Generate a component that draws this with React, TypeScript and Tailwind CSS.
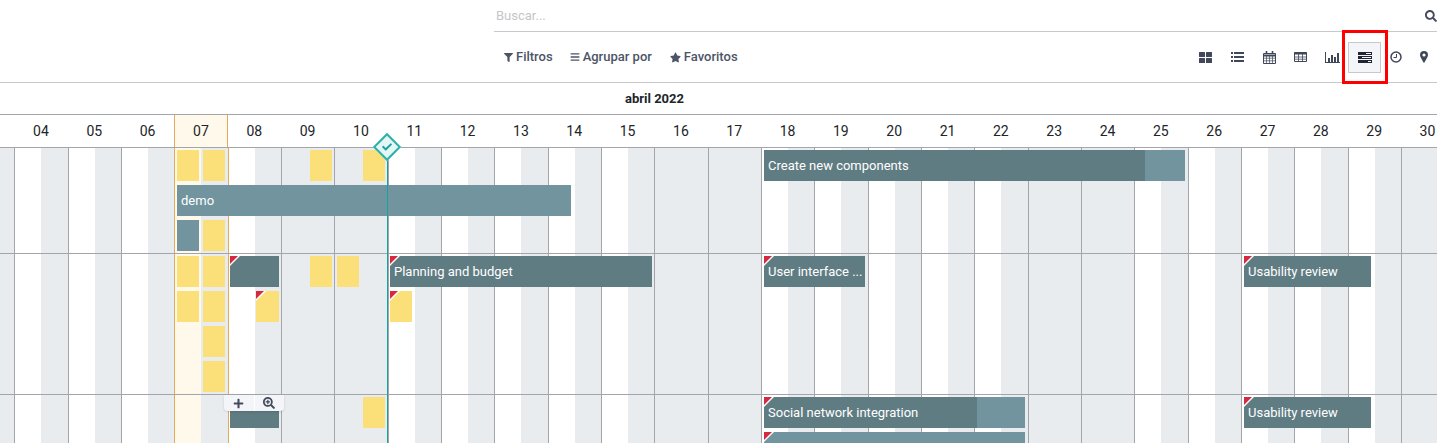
import { FaFilter, FaBars, FaStar, FaSearch, FaPlus, FaSearchPlus, FaCheck } from "react-icons/fa";

const days = ["04", "05", "06", "07", "08", "09", "10", "11", "12", "13", "14", "15", "16", "17", "18", "19", "20", "21", "22", "23", "24", "25", "26", "27", "28", "29", "30"];
const weekend = ["09", "10", "16", "17", "23", "24", "30"];

function Background() {
  return (
    <div className="absolute inset-0 grid grid-cols-[14.3px_repeat(27,53.33px)]">
      <div className="bg-[#e9ecef]" />
      {days.map((d) => (
        <div
          key={d}
          className={`flex border-l ${d === "07" || d === "08" ? "border-[#e6a95c]" : "border-[#a3a5aa]"}`}
        >
          <div className={`flex-1 ${weekend.includes(d) ? "bg-[#e9ecef]" : d === "07" ? "bg-[#fff9ec]" : "bg-white"}`} />
          <div className="flex-1 bg-[#e9ecef]" />
        </div>
      ))}
    </div>
  );
}

interface Pill {
  cls: string;
  color: "yellow" | "teal" | "dark";
  label?: string;
  warn?: boolean;
  progress?: string;
}

function GanttPill({ cls, color, label, warn, progress }: Pill) {
  const bg = color === "yellow" ? "bg-[#fbe07a]" : color === "teal" ? "bg-[#71949e]" : "bg-[#607c83]";
  return (
    <div className={`absolute h-[31px] overflow-hidden ${bg} ${cls}`}>
      {progress && <div className={`absolute inset-y-0 left-0 bg-[#607c83] ${progress}`} />}
      {warn && (
        <>
          <div className="absolute top-0 left-0 h-0 w-0 border-t-[10px] border-r-[10px] border-t-white border-r-transparent" />
          <div className="absolute top-0 left-0 h-0 w-0 border-t-[8px] border-r-[8px] border-t-[#d32a40] border-r-transparent" />
        </>
      )}
      {label && <span className="relative block truncate pl-1 text-[13px] leading-[31px] text-white">{label}</span>}
    </div>
  );
}

const row1: Pill[] = [
  { cls: "left-[177px] top-[2px] w-[22px]", color: "yellow" },
  { cls: "left-[203px] top-[2px] w-[22px]", color: "yellow" },
  { cls: "left-[310px] top-[2px] w-[22px]", color: "yellow" },
  { cls: "left-[363px] top-[2px] w-[22px]", color: "yellow" },
  { cls: "left-[764px] top-[2px] w-[421px]", color: "teal", label: "Create new components", progress: "w-[381px]" },
  { cls: "left-[177px] top-[37px] w-[394px]", color: "teal", label: "demo" },
  { cls: "left-[177px] top-[72px] w-[22px]", color: "teal" },
  { cls: "left-[203px] top-[72px] w-[22px]", color: "yellow" },
];

const row2: Pill[] = [
  { cls: "left-[177px] top-[2px] w-[22px]", color: "yellow" },
  { cls: "left-[203px] top-[2px] w-[22px]", color: "yellow" },
  { cls: "left-[230px] top-[2px] w-[49px]", color: "dark", warn: true },
  { cls: "left-[310px] top-[2px] w-[22px]", color: "yellow" },
  { cls: "left-[337px] top-[2px] w-[22px]", color: "yellow" },
  { cls: "left-[390px] top-[2px] w-[262px]", color: "dark", warn: true, label: "Planning and budget" },
  { cls: "left-[764px] top-[2px] w-[101px]", color: "dark", warn: true, label: "User interface ..." },
  { cls: "left-[1244px] top-[2px] w-[127px]", color: "dark", warn: true, label: "Usability review" },
  { cls: "left-[177px] top-[37px] w-[22px]", color: "yellow" },
  { cls: "left-[203px] top-[37px] w-[22px]", color: "yellow" },
  { cls: "left-[256px] top-[37px] w-[23px]", color: "yellow", warn: true },
  { cls: "left-[390px] top-[37px] w-[22px]", color: "yellow", warn: true },
  { cls: "left-[203px] top-[72px] w-[22px]", color: "yellow" },
  { cls: "left-[203px] top-[107px] w-[22px]", color: "yellow" },
];

const row3: Pill[] = [
  { cls: "left-[230px] top-[2px] w-[49px]", color: "dark" },
  { cls: "left-[363px] top-[2px] w-[22px]", color: "yellow" },
  { cls: "left-[764px] top-[2px] w-[261px]", color: "teal", warn: true, label: "Social network integration", progress: "w-[213px]" },
  { cls: "left-[1244px] top-[2px] w-[127px]", color: "dark", warn: true, label: "Usability review" },
  { cls: "left-[764px] top-[37px] w-[261px]", color: "teal", warn: true },
];

function KanbanIcon() {
  return (
    <svg width="13" height="11" viewBox="0 0 13 11" fill="currentColor">
      <rect width="6" height="5" rx="0.5" />
      <rect x="7" width="6" height="5" rx="0.5" />
      <rect y="6" width="6" height="5" rx="0.5" />
      <rect x="7" y="6" width="6" height="5" rx="0.5" />
    </svg>
  );
}

function ListIcon() {
  return (
    <svg width="13" height="10" viewBox="0 0 13 10" fill="currentColor">
      <rect width="2" height="2" />
      <rect y="4" width="2" height="2" />
      <rect y="8" width="2" height="2" />
      <rect x="3" width="10" height="2" />
      <rect x="3" y="4" width="10" height="2" />
      <rect x="3" y="8" width="10" height="2" />
    </svg>
  );
}

function CalendarIcon() {
  return (
    <svg width="13" height="13" viewBox="0 0 13 13" fill="none" stroke="currentColor">
      <path d="M.5 2.5h12v10H.5z" />
      <path d="M.5 4.5h12" strokeWidth="2" />
      <path d="M.5 7.2h12M.5 9.8h12M3.5 5v7.5M6.5 5v7.5M9.5 5v7.5" strokeWidth="0.7" />
      <path d="M3.5 0v3M9.5 0v3" strokeWidth="1.6" />
    </svg>
  );
}

function TableIcon() {
  return (
    <svg width="13" height="10" viewBox="0 0 13 10" fill="none" stroke="currentColor">
      <path d="M.5.5h12v9H.5z" />
      <path d="M0 1.5h13" strokeWidth="2" />
      <path d="M.5 5h12M.5 7.2h12M4.5 2v8M8.5 2v8" strokeWidth="0.8" />
    </svg>
  );
}

function ChartIcon() {
  return (
    <svg width="15" height="11" viewBox="0 0 15 11" fill="currentColor">
      <path d="M0 0h1v10h14v1H0z" />
      <rect x="3" y="6" width="2" height="4" />
      <rect x="6" y="3" width="2" height="7" />
      <rect x="9" y="5" width="2" height="5" />
      <rect x="12" y="1" width="2" height="9" />
    </svg>
  );
}

function GanttIcon() {
  return (
    <svg width="14" height="11" viewBox="0 0 14 11">
      <rect width="14" height="3" fill="#1f2533" />
      <rect y="4" width="14" height="3" fill="#1f2533" />
      <rect y="8" width="14" height="3" fill="#1f2533" />
      <rect x="8" y="1" width="5" height="1" fill="#f4f5f8" />
      <rect x="4" y="5" width="9" height="1" fill="#f4f5f8" />
      <rect x="10" y="9" width="3" height="1" fill="#f4f5f8" />
    </svg>
  );
}

function ClockIcon() {
  return (
    <svg width="12" height="12" viewBox="0 0 12 12" fill="none" stroke="currentColor">
      <circle cx="6" cy="6" r="5" strokeWidth="1.5" />
      <path d="M6.5 3v3.5H3.5" strokeWidth="1" />
    </svg>
  );
}

function MarkerIcon() {
  return (
    <svg width="8" height="12" viewBox="0 0 8 12" fill="currentColor">
      <path fillRule="evenodd" d="M4 0a4 4 0 0 1 4 4c0 1.6-2.6 6-4 8C2.6 10 0 5.6 0 4a4 4 0 0 1 4-4zm0 2.4a1.6 1.6 0 1 0 0 3.2 1.6 1.6 0 0 0 0-3.2z" />
    </svg>
  );
}

const views = [KanbanIcon, ListIcon, CalendarIcon, TableIcon, ChartIcon];

export default function App() {
  return (
    <div className="h-[443px] w-[1437px] overflow-hidden bg-white font-['Roboto',sans-serif] text-[#4c4c4c]">
      <div className="ml-[494px] flex h-8 items-center justify-between border-b border-[#c8c9cc]">
        <span className="pl-[2px] text-[13px] text-[#c4c6c9]">Buscar...</span>
        <FaSearch className="size-[12px] text-[#444b5a]" />
      </div>
      <div className="flex h-[51px] items-center border-b border-[#c8c9cc] pl-[504px] text-[13px] font-medium text-[#4c5566]">
        <div className="flex items-center gap-[17px]">
          <span className="flex items-center gap-[3px]"><FaFilter className="size-[9px]" />Filtros</span>
          <span className="flex items-center gap-[3px]"><FaBars className="size-[10px]" />Agrupar por</span>
          <span className="ml-[1px] flex items-center gap-[3px]"><FaStar className="size-[11px]" />Favoritos</span>
        </div>
        <div className="ml-auto flex items-center text-[#3f4759]">
          {views.map((Icon, i) => (
            <div key={i} className="flex w-[31.6px] justify-center"><Icon /></div>
          ))}
          <div className="relative flex h-[31px] w-[33px] items-center justify-center border border-[#c8c9cc] bg-[#f4f5f8]">
            <GanttIcon />
            <div className="absolute -top-[13px] -right-[8px] -bottom-[12px] -left-[7px] border-[3px] border-[#f00]" />
          </div>
          <div className="flex w-[30px] justify-center"><ClockIcon /></div>
          <div className="flex w-[26px] justify-center"><MarkerIcon /></div>
        </div>
      </div>
      <div className="flex h-[32px] items-center justify-center border-b border-[#a3a5aa] pr-[128px] text-[13px] font-bold text-[#212529]">
        abril 2022
      </div>
      <div className="grid h-[33px] grid-cols-[14.3px_repeat(27,53.33px)] border-b border-[#a3a5aa] text-[14px] text-[#212529]">
        <div />
        {days.map((d) => (
          <div key={d} className={`flex items-center justify-center ${d === "07" ? "border-x border-[#e6a95c] bg-[#fff9ec]" : ""}`}>{d}</div>
        ))}
      </div>
      <div className="relative h-[296px]">
        <Background />
        <div className="relative h-[106px] border-b border-[#a3a5aa]">
          {row1.map((p) => <GanttPill key={p.cls} {...p} />)}
        </div>
        <div className="relative h-[141px] border-b border-[#a3a5aa]">
          {row2.map((p) => <GanttPill key={p.cls} {...p} />)}
        </div>
        <div className="relative h-[49px]">
          {row3.map((p) => <GanttPill key={p.cls} {...p} />)}
          <div className="absolute left-[224px] top-0 flex h-4 w-[60px] rounded-b bg-[#f4f5f8] shadow">
            <div className="flex flex-1 items-center justify-center border-r border-white"><FaPlus className="size-[11px] text-[#444b5a]" /></div>
            <div className="flex flex-1 items-center justify-center"><FaSearchPlus className="size-[12px] text-[#444b5a]" /></div>
          </div>
        </div>
        <div className="absolute inset-y-0 left-[387px] w-px bg-[#17a2a0]" />
        <div className="absolute left-[377px] top-[-11px] flex size-[20px] rotate-45 items-center justify-center border-2 border-[#2bb0ab] bg-[#e6f6f5]">
          <FaCheck className="size-[10px] -rotate-45 text-[#17a2a0]" />
        </div>
      </div>
    </div>
  );
}
